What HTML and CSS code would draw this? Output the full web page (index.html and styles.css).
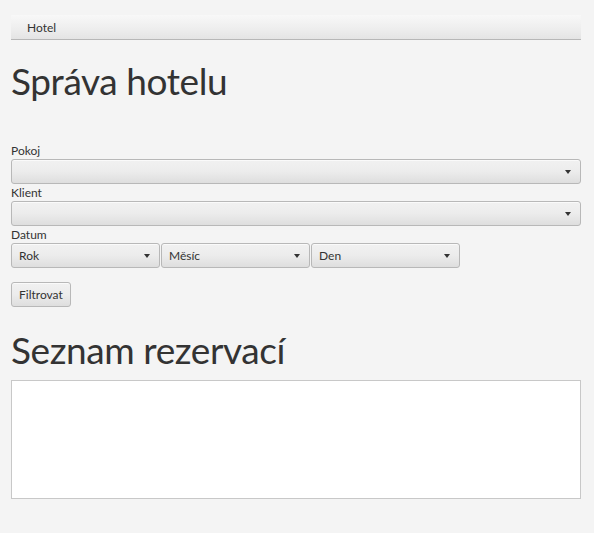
FILE: index.html
```html
<!DOCTYPE html>
<html lang="cs">
<head>
<meta charset="utf-8">
<title>Správa hotelu</title>
<link rel="stylesheet" href="styles.css">
</head>
<body>
<div class="app">
  <div class="menubar"><span class="menu">Hotel</span></div>
  <h1 class="title">Správa hotelu</h1>
  <div class="form">
    <label class="lbl">Pokoj</label>
    <div class="combo wide"><span class="val"></span><span class="arrow"></span></div>
    <label class="lbl">Klient</label>
    <div class="combo wide"><span class="val"></span><span class="arrow"></span></div>
    <label class="lbl">Datum</label>
    <div class="daterow">
      <div class="combo small"><span class="val">Rok</span><span class="arrow"></span></div>
      <div class="combo small"><span class="val">Měsíc</span><span class="arrow"></span></div>
      <div class="combo small"><span class="val">Den</span><span class="arrow"></span></div>
    </div>
  </div>
  <button class="btn">Filtrovat</button>
  <h1 class="title title2">Seznam rezervací</h1>
  <div class="table"></div>
</div>
</body>
</html>
```

FILE: styles.css
```css
html, body {
  margin: 0;
  padding: 0;
  background: #f4f4f4;
}
body {
  font-family: Lato, "Open Sans", sans-serif;
  font-size: 12px;
  color: #333333;
}
.app {
  display: flex;
  flex-direction: column;
  align-items: flex-start;
  padding: 15px 13px 0 11px;
}
.menubar {
  align-self: stretch;
  height: 24px;
  border-bottom: 1px solid #b7b7b7;
  background: linear-gradient(to bottom, #f8f8f8 0%, #ededed 60%, #e4e4e4 100%);
  display: flex;
  align-items: center;
}
.menu {
  padding-left: 16px;
  line-height: 17px;
}
.title {
  margin: 17px 0 0 0;
  font-weight: normal;
  font-size: 37px;
  letter-spacing: -0.4px;
  line-height: 48px;
  color: #333333;
}
.form {
  margin-top: 37px;
  align-self: stretch;
  display: flex;
  flex-direction: column;
}
.lbl {
  line-height: 17px;
  height: 17px;
}
.combo {
  box-sizing: border-box;
  height: 25px;
  border: 1px solid #b8b8b8;
  border-radius: 3px;
  background: linear-gradient(to bottom, #f1f1f1 0%, #ececec 50%, #dedede 100%);
  box-shadow: inset 0 1px 0 #fafafa;
  display: flex;
  align-items: center;
  justify-content: space-between;
  padding: 0 9px 0 7px;
}
.val {
  line-height: 17px;
}
.arrow {
  width: 0;
  height: 0;
  border-left: 3.5px solid transparent;
  border-right: 3.5px solid transparent;
  border-top: 4px solid #333333;
}
.daterow {
  display: flex;
  gap: 1px;
}
.small {
  width: 149px;
}
.btn {
  margin-top: 14px;
  box-sizing: border-box;
  height: 25px;
  padding: 0 7px;
  font-family: inherit;
  font-size: 12px;
  color: #333333;
  border: 1px solid #b8b8b8;
  border-radius: 3px;
  background: linear-gradient(to bottom, #f1f1f1 0%, #ececec 50%, #dedede 100%);
  box-shadow: inset 0 1px 0 #fafafa;
}
.title2 {
  margin-top: 19px;
}
.table {
  margin-top: 6px;
  align-self: stretch;
  box-sizing: border-box;
  height: 119px;
  background: #ffffff;
  border: 1px solid #c8c8c8;
}
```
